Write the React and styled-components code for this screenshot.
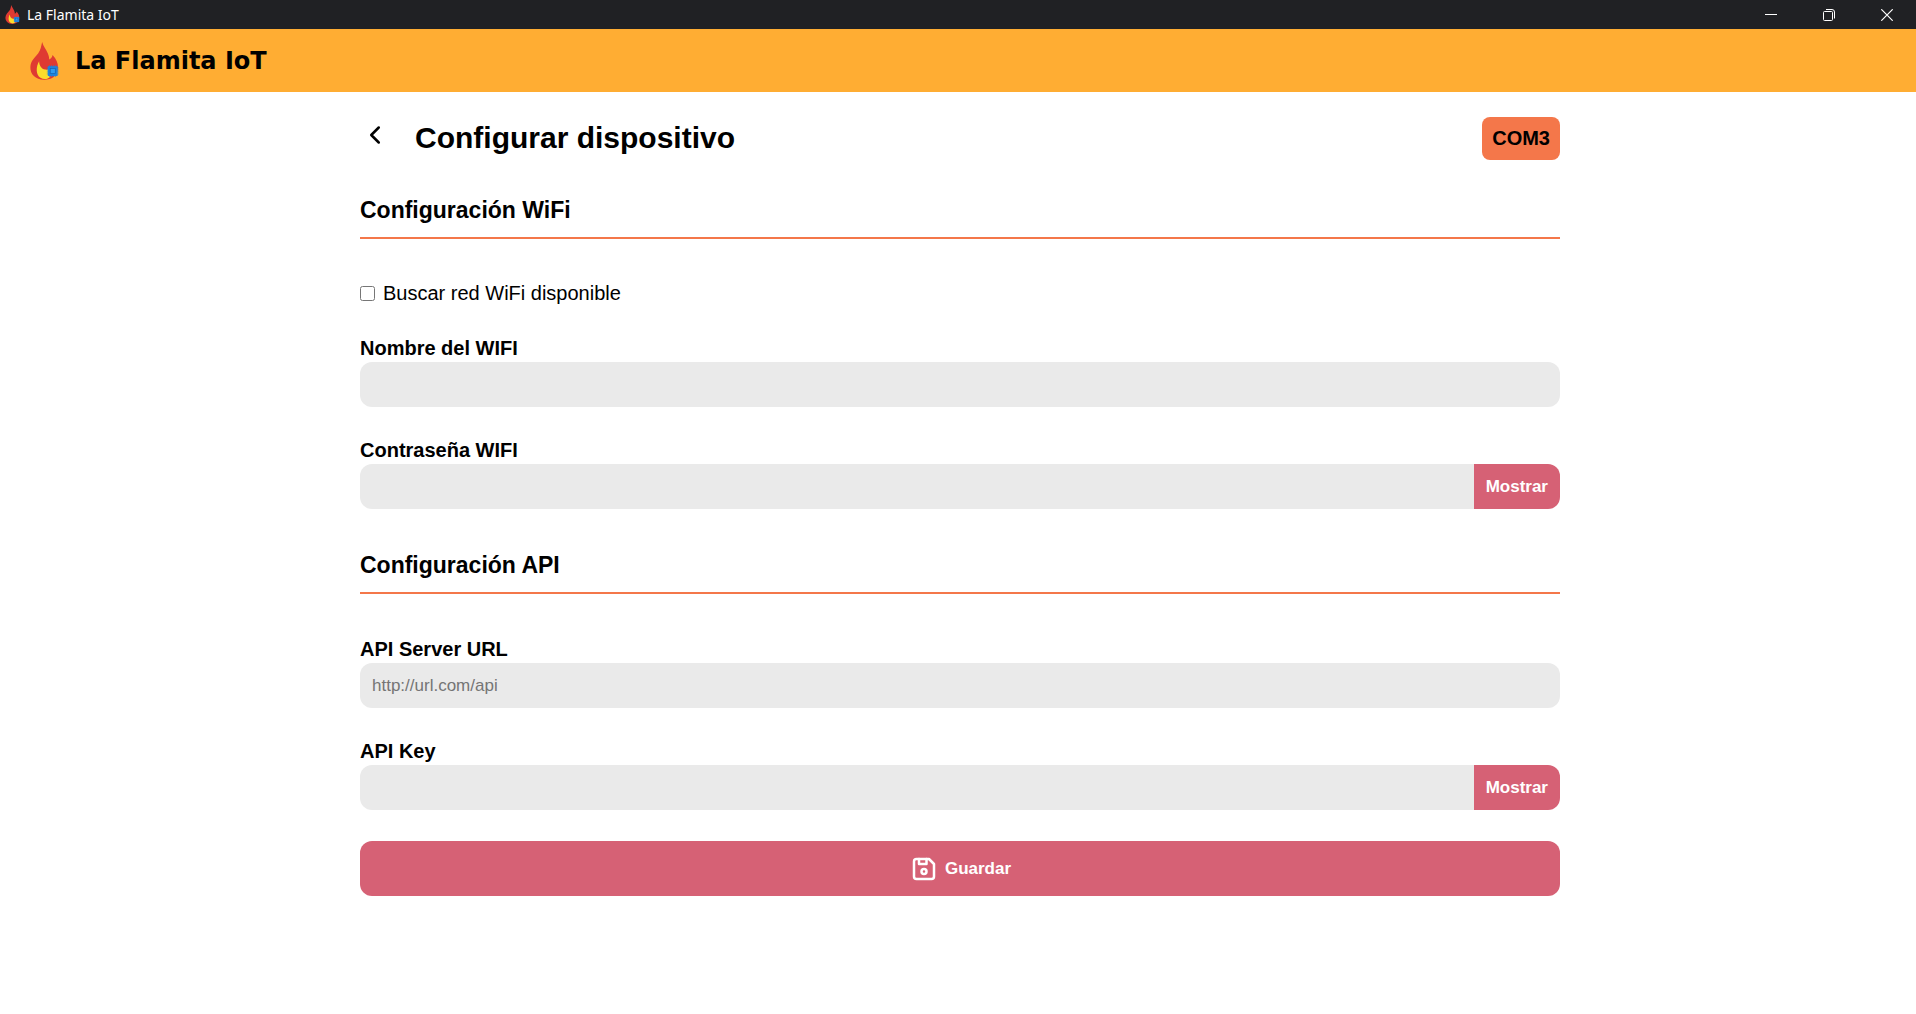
import React, { useState } from "react";
import styled, { createGlobalStyle } from "styled-components";
import { TbChevronLeft, TbDeviceFloppy } from "react-icons/tb";

const colors = {
  chrome: "#202124",
  amber: "#ffad33",
  orange: "#f4774a",
  rose: "#d66175",
  field: "#eaeaea",
};

const GlobalStyle = createGlobalStyle`
  *, *::before, *::after { box-sizing: border-box; }
  body {
    margin: 0;
    background: #fff;
    color: #000;
    font-family: "Liberation Sans", Arial, sans-serif;
    font-size: 20px;
  }
  button, input { font-family: inherit; }
`;

const TitleBar = styled.div`
  display: flex;
  align-items: center;
  justify-content: space-between;
  height: 29px;
  padding-left: 5px;
  background: ${colors.chrome};
  color: #fff;
`;

const WindowTitle = styled.div`
  display: flex;
  align-items: center;
  gap: 7px;
  font: 14px/20px "Noto Sans", "Segoe UI", sans-serif;
`;

const WindowControls = styled.div`
  display: flex;
`;

const WindowButton = styled.button`
  display: flex;
  align-items: center;
  justify-content: center;
  width: 58px;
  height: 29px;
  padding: 0;
  border: 0;
  background: none;
  color: inherit;
`;

const AppHeader = styled.header`
  display: flex;
  align-items: center;
  gap: 16px;
  height: 63px;
  padding: 0 30px;
  background: ${colors.amber};
`;

const Brand = styled.span`
  font: bold 24px/30px "DejaVu Sans", sans-serif;
`;

const Page = styled.main`
  max-width: 1232px;
  margin: 0 auto;
  padding: 25px 14px 40px 18px;
`;

const PageHeader = styled.div`
  display: flex;
  align-items: center;
  gap: 25px;
  margin-bottom: 36px;
`;

const BackButton = styled.button`
  display: flex;
  padding: 0 0 8px;
  border: 0;
  background: none;
  color: #000;
  cursor: pointer;
`;

const PageTitle = styled.h1`
  flex: 1;
  margin: 0;
  padding-bottom: 2px;
  font-size: 30px;
  line-height: 34px;
`;

const PortBadge = styled.span`
  padding: 10px;
  border-radius: 8px;
  background: ${colors.orange};
  font-weight: bold;
  line-height: 23px;
`;

const Section = styled.section`
  display: flex;
  flex-direction: column;
  gap: 31px;

  & + & { margin-top: 42px; }
`;

const SectionTitle = styled.h2`
  margin: 0 0 12px;
  padding-bottom: 13px;
  border-bottom: 2px solid ${colors.orange};
  font-size: 23px;
  line-height: 28px;
`;

const CheckRow = styled.label`
  display: flex;
  align-items: center;
  gap: 8px;
  line-height: 23px;
`;

const Checkbox = styled.input`
  width: 15px;
  height: 15px;
  margin: 0;
`;

const FieldGroup = styled.div`
  display: flex;
  flex-direction: column;
  gap: 2px;
`;

const FieldLabel = styled.label`
  font-weight: bold;
  line-height: 24px;
`;

const InputRow = styled.div`
  display: flex;
  height: 45px;
  border-radius: 12px;
  overflow: hidden;
`;

const TextInput = styled.input`
  flex: 1;
  min-width: 0;
  padding: 0 12px;
  border: 0;
  background: ${colors.field};
  font-size: 17px;

  &::placeholder { color: #757575; }
`;

const ActionButton = styled.button`
  border: 0;
  background: ${colors.rose};
  color: #fff;
  font-size: 17px;
  font-weight: bold;
  cursor: pointer;
`;

const RevealButton = styled(ActionButton)`
  padding: 0 12px;
`;

const SaveButton = styled(ActionButton)`
  display: flex;
  align-items: center;
  justify-content: center;
  gap: 6px;
  width: 100%;
  height: 55px;
  margin-top: 31px;
  border-radius: 12px;
`;

function FlameLogo({ width, height }) {
  return (
    <svg width={width} height={height} viewBox="90 125 86 113" aria-hidden="true">
      <path
        fill="#df3a32"
        d="M126 125C129 137 138 147 143 159C146 166 147 171 147 177C152 175 156 171 157 164C168 176 174 188 173 202C171 226 155 237 132 237C106 237 90 220 91 199C92 180 104 172 114 159C122 149 123 137 126 125Z"
      />
      <path
        fill="#fbdc2c"
        d="M117 182C117 194 124 205 135 207C139 208 143 207 146 205L150 228C143 236 130 237 121 231C107 222 107 199 117 182Z"
      />
      <path
        stroke="#1d83dd"
        strokeWidth="2"
        d="M148 194v35M154 194v35M160 194v35M166 194v35M140 202h35M140 208h35M140 214h35M140 220h35"
      />
      <rect x="143" y="197" width="29" height="29" fill="#1d83dd" />
      <rect x="150" y="204" width="15" height="15" fill="#2f9bf0" stroke="#155fae" strokeWidth="2" />
    </svg>
  );
}

function Field({ id, label, secret, placeholder }) {
  const [visible, setVisible] = useState(false);
  return (
    <FieldGroup>
      <FieldLabel htmlFor={id}>{label}</FieldLabel>
      <InputRow>
        <TextInput id={id} type={secret && !visible ? "password" : "text"} placeholder={placeholder} />
        {secret && (
          <RevealButton type="button" onClick={() => setVisible(!visible)}>
            {visible ? "Ocultar" : "Mostrar"}
          </RevealButton>
        )}
      </InputRow>
    </FieldGroup>
  );
}

export default function App() {
  return (
    <>
      <GlobalStyle />
      <TitleBar>
        <WindowTitle>
          <FlameLogo width={15} height={19} />
          La Flamita IoT
        </WindowTitle>
        <WindowControls>
          <WindowButton aria-label="Minimizar">
            <svg width="12" height="12" fill="none" stroke="currentColor">
              <path d="M0 5.5h12" />
            </svg>
          </WindowButton>
          <WindowButton aria-label="Restaurar">
            <svg width="12" height="12" fill="none" stroke="currentColor">
              <rect x="0.5" y="2.5" width="9" height="9" rx="1" />
              <path d="M3 0.5h6a2.5 2.5 0 0 1 2.5 2.5v6.5" />
            </svg>
          </WindowButton>
          <WindowButton aria-label="Cerrar">
            <svg width="12" height="12" fill="none" stroke="currentColor" strokeWidth="1.2">
              <path d="M0.3 0.3l11.4 11.4M11.7 0.3L0.3 11.7" />
            </svg>
          </WindowButton>
        </WindowControls>
      </TitleBar>
      <AppHeader>
        <FlameLogo width={29} height={38} />
        <Brand>La Flamita IoT</Brand>
      </AppHeader>
      <Page>
        <PageHeader>
          <BackButton type="button" aria-label="Volver">
            <TbChevronLeft size={30} />
          </BackButton>
          <PageTitle>Configurar dispositivo</PageTitle>
          <PortBadge>COM3</PortBadge>
        </PageHeader>
        <form onSubmit={(event) => event.preventDefault()}>
          <Section>
            <SectionTitle>Configuración WiFi</SectionTitle>
            <CheckRow>
              <Checkbox type="checkbox" />
              Buscar red WiFi disponible
            </CheckRow>
            <Field id="wifi-name" label="Nombre del WIFI" />
            <Field id="wifi-password" label="Contraseña WIFI" secret />
          </Section>
          <Section>
            <SectionTitle>Configuración API</SectionTitle>
            <Field id="api-url" label="API Server URL" placeholder="http://url.com/api" />
            <Field id="api-key" label="API Key" secret />
          </Section>
          <SaveButton type="submit">
            <TbDeviceFloppy size={30} />
            Guardar
          </SaveButton>
        </form>
      </Page>
    </>
  );
}
